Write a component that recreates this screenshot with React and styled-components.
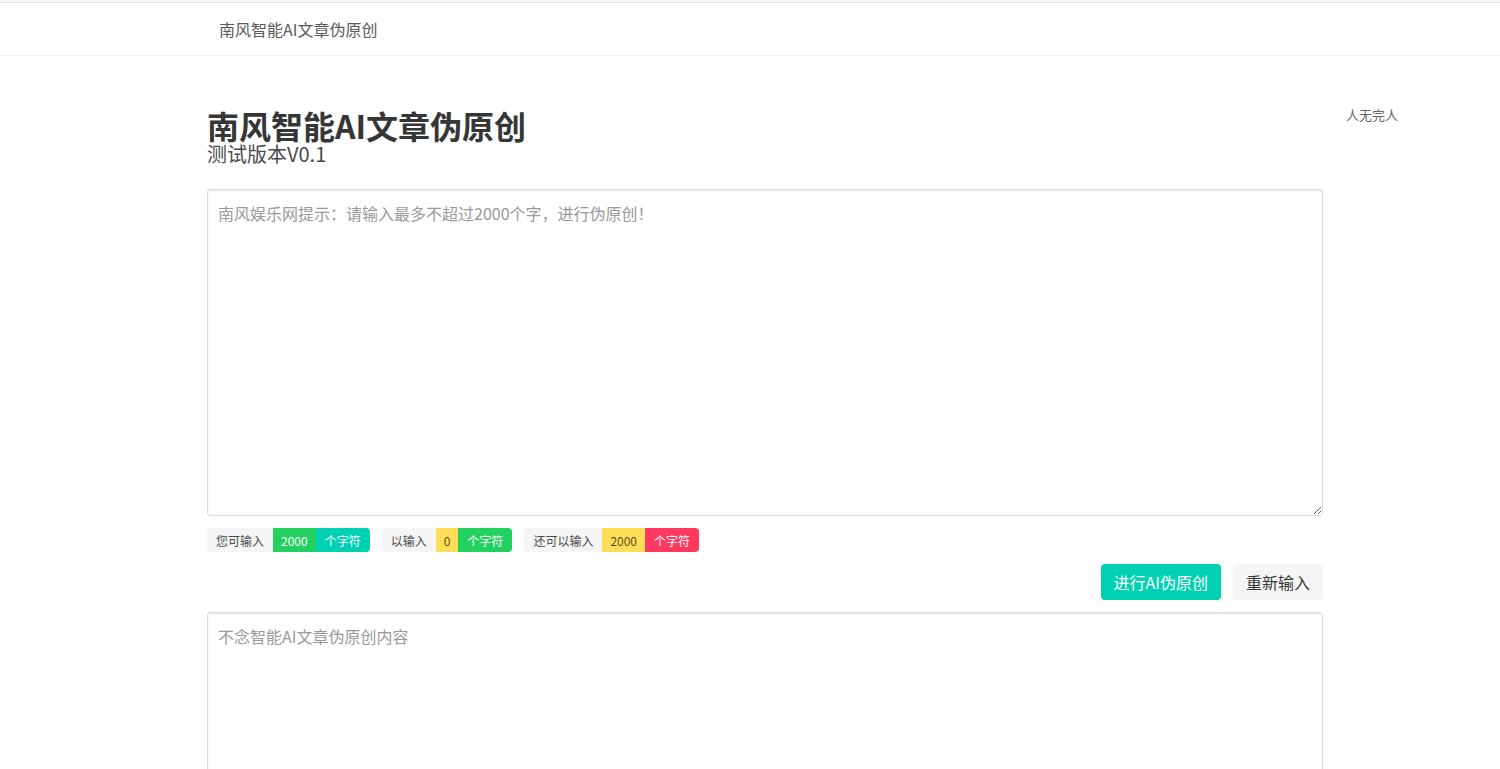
import React, { useState } from 'react';
import styled, { createGlobalStyle } from 'styled-components';

const GlobalStyle = createGlobalStyle`
  html, body {
    margin: 0;
    padding: 0;
    background: #fff;
    font-family: "Noto Sans CJK SC", "Noto Sans", sans-serif;
    color: #4a4a4a;
  }
  * { box-sizing: border-box; }
`;

const TopStrip = styled.div`
  height: 3px;
  background: #f7f7f7;
  border-bottom: 1px solid #e3e3e3;
`;

const Navbar = styled.nav`
  height: 53px;
  border-bottom: 1px solid #f0f0f0;
  display: flex;
  align-items: center;
  padding-left: 207px;
`;

const NavItem = styled.a`
  padding: 0 12px;
  font-size: 16px;
  color: #5a5a5a;
  text-decoration: none;
  line-height: 24px;
`;

const Page = styled.div`
  display: flex;
  align-items: flex-start;
  padding: 52px 0 0 207px;
`;

const Main = styled.main`
  width: 1116px;
  display: flex;
  flex-direction: column;
`;

const Aside = styled.aside`
  margin-left: 23px;
  margin-top: -3px;
  font-size: 13px;
  line-height: 20px;
  color: #666;
`;

const Title = styled.h1`
  margin: 0;
  font-size: 32px;
  font-weight: 700;
  line-height: 34px;
  color: #363636;
`;

const Subtitle = styled.h2`
  margin: 0;
  font-size: 20px;
  font-weight: 400;
  line-height: 24px;
  color: #4a4a4a;
`;

const TextArea = styled.textarea`
  display: block;
  width: 100%;
  height: ${p => p.$h}px;
  margin-top: ${p => p.$mt || 0}px;
  padding: 11px 10px;
  border: 1px solid #dbdbdb;
  border-radius: 3px;
  box-shadow: inset 0 1px 2px rgba(10, 10, 10, 0.1);
  font-family: inherit;
  font-size: 16px;
  line-height: 24px;
  color: #363636;
  resize: vertical;
  outline: none;
  &::placeholder { color: #9a9a9a; }
`;

const TagsRow = styled.div`
  display: flex;
  gap: 12px;
  margin-top: 12px;
`;

const TagGroup = styled.div`
  display: flex;
  & > span:first-child { border-radius: 4px 0 0 4px; }
  & > span:last-child { border-radius: 0 4px 4px 0; }
`;

const tagColors = {
  light: ['#f5f5f5', '#4a4a4a'],
  success: ['#23d160', '#fff'],
  primary: ['#00d1b2', '#fff'],
  warning: ['#ffdd57', 'rgba(0,0,0,0.7)'],
  danger: ['#ff3860', '#fff'],
};

const Tag = styled.span`
  height: 24px;
  padding: 0 ${p => (p.$num ? 8 : 9)}px;
  display: inline-flex;
  align-items: center;
  font-size: 12px;
  background: ${p => tagColors[p.$c][0]};
  color: ${p => tagColors[p.$c][1]};
`;

const Actions = styled.div`
  display: flex;
  justify-content: flex-end;
  gap: 12px;
  margin-top: 12px;
`;

const Button = styled.button`
  height: 36px;
  padding: 0 12px;
  border: 1px solid transparent;
  border-radius: 4px;
  font-family: inherit;
  font-size: 16px;
  cursor: pointer;
  background: ${p => (p.$primary ? '#00d1b2' : '#f5f5f5')};
  color: ${p => (p.$primary ? '#fff' : '#363636')};
`;

const MAX = 2000;

export default function App() {
  const [text, setText] = useState('');
  const [result, setResult] = useState('');
  const used = text.length;

  return (
    <>
      <GlobalStyle />
      <TopStrip />
      <Navbar>
        <NavItem href="#">南风智能AI文章伪原创</NavItem>
      </Navbar>
      <Page>
        <Main>
          <Title>南风智能AI文章伪原创</Title>
          <Subtitle>测试版本V0.1</Subtitle>
          <TextArea
            $h={327}
            $mt={23}
            maxLength={MAX}
            value={text}
            onChange={e => setText(e.target.value)}
            placeholder="南风娱乐网提示：请输入最多不超过2000个字，进行伪原创！"
          />
          <TagsRow>
            <TagGroup>
              <Tag $c="light">您可输入</Tag>
              <Tag $c="success" $num>{MAX}</Tag>
              <Tag $c="primary">个字符</Tag>
            </TagGroup>
            <TagGroup>
              <Tag $c="light">以输入</Tag>
              <Tag $c="warning" $num>{used}</Tag>
              <Tag $c="success">个字符</Tag>
            </TagGroup>
            <TagGroup>
              <Tag $c="light">还可以输入</Tag>
              <Tag $c="warning" $num>{MAX - used}</Tag>
              <Tag $c="danger">个字符</Tag>
            </TagGroup>
          </TagsRow>
          <Actions>
            <Button $primary onClick={() => setResult(text)}>进行AI伪原创</Button>
            <Button onClick={() => { setText(''); setResult(''); }}>重新输入</Button>
          </Actions>
          <TextArea
            $h={327}
            $mt={12}
            readOnly
            value={result}
            placeholder="不念智能AI文章伪原创内容"
          />
        </Main>
        <Aside>人无完人</Aside>
      </Page>
    </>
  );
}
